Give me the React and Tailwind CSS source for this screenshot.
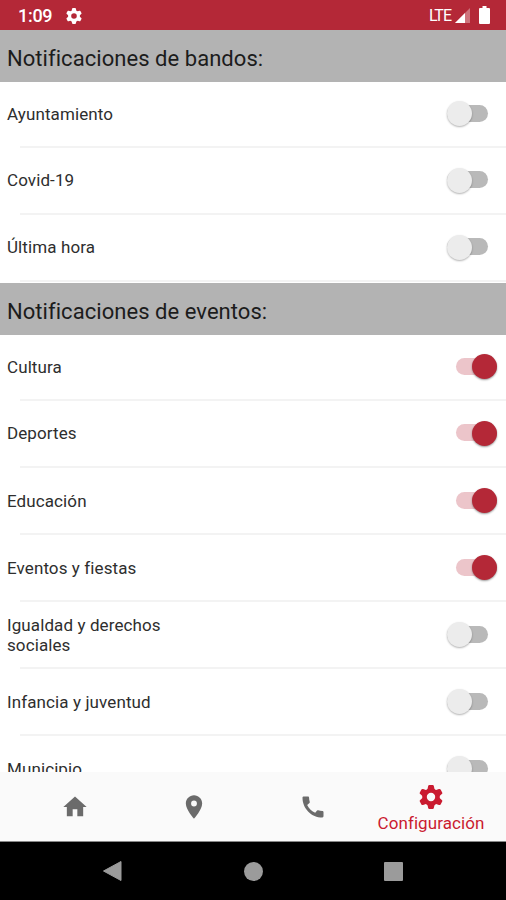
import { useState } from "react";
import { MdCall, MdHome, MdPlace } from "react-icons/md";

const BANDOS = [
  { name: "Ayuntamiento", on: false },
  { name: "Covid-19", on: false },
  { name: "Última hora", on: false },
];

const EVENTOS = [
  { name: "Cultura", on: true },
  { name: "Deportes", on: true },
  { name: "Educación", on: true },
  { name: "Eventos y fiestas", on: true },
  { name: "Igualdad y derechos sociales", on: false },
  { name: "Infancia y juventud", on: false },
  { name: "Municipio", on: false },
];

// six-toothed gear, a ring with one rounded tooth every 60 degrees
function GearIcon({ className }) {
  return (
    <svg className={className} viewBox="0 0 24 24" fill="currentColor">
      <circle cx="12" cy="12" r="6.5" fill="none" stroke="currentColor" strokeWidth="4.6" />
      {[0, 60, 120, 180, 240, 300].map((deg) => (
        <path
          key={deg}
          d="M8.200 5.500 9.100 1.200Q9.300 0 10.400 0h3.200q1.100 0 1.300 1.200l.9 4.300z"
          transform={`rotate(${deg} 12 12)`}
        />
      ))}
    </svg>
  );
}

function StatusBar() {
  return (
    <header className="flex h-[30px] shrink-0 items-center bg-[#b42837] pr-4 pl-[18px] pt-px text-white">
      <span className="text-[18px] font-medium tracking-[-0.3px]">1:09</span>
      <GearIcon className="ml-[14px] size-4" />
      <span className="ml-auto pt-px text-[16px] tracking-[-1px]">LTE</span>
      <svg className="ml-[4px]" width="15" height="15" viewBox="0 0 15 15" fill="currentColor">
        <path d="M15 0v15H0z" opacity="0.35" />
        <path d="M10 5v10H0z" />
      </svg>
      <svg className="mb-[2px] ml-[9px]" width="11" height="18" viewBox="0 0 11 18" fill="currentColor">
        <path d="M3.500 0h4v2H10q1 0 1 1v14q0 1-1 1H1q-1 0-1-1V3q0-1 1-1h2.500z" />
      </svg>
    </header>
  );
}

function Toggle({ on, onClick, label }) {
  return (
    <button
      role="switch"
      aria-checked={on}
      aria-label={label}
      onClick={onClick}
      className={`mb-px flex h-[26px] w-[41px] items-center ${on ? "mr-[9.5px]" : "mr-[18.5px]"}`}
    >
      <span
        className={`flex h-[17px] w-[41px] items-center rounded-full ${
          on ? "justify-end bg-[#ecc5ca]" : "bg-[#b9b9b9]"
        }`}
      >
        <span
          className={`mt-px size-[25px] shrink-0 rounded-full ${
            on
              ? "bg-[#b42837] shadow-[0_1px_2px_rgba(0,0,0,0.4)]"
              : "bg-[#ececec] shadow-[0_1px_2px_rgba(0,0,0,0.3)]"
          }`}
        />
      </span>
    </button>
  );
}

function Section({ title, items }) {
  const [rows, setRows] = useState(items);

  const toggle = (name) => {
    setRows(rows.map((r) => (r.name === name ? { ...r, on: !r.on } : r)));
  };

  return (
    <section className="shrink-0 pb-[1.6px]">
      <h2 className="flex h-[51.5px] items-center bg-[#b3b3b3] pt-[5px] pl-[7px] text-[22px] tracking-[0.05px] text-[#1c1c1c]">
        {title}
      </h2>
      {rows.map((row) => (
        <div key={row.name} className="group">
          <div className="flex h-[65px] items-center justify-between pl-[7px] group-first-of-type:h-16">
            <span className="w-[170px] text-[17px] leading-5 tracking-[0.1px] text-[#2e2e2e]">
              {row.name}
            </span>
            <Toggle on={row.on} label={row.name} onClick={() => toggle(row.name)} />
          </div>
          <div className="ml-5 h-[2.1px] bg-[#f3f3f3]" />
        </div>
      ))}
    </section>
  );
}

function TabBar() {
  return (
    <nav className="grid h-[70px] shrink-0 grid-cols-[119px_119px_119px_118px] border-b border-[#888] bg-[#fafafa] pl-[15px] text-[#6b6b6b]">
      <button className="flex items-center justify-center pt-px">
        <MdHome className="size-7" />
      </button>
      <button className="flex items-center justify-center pt-px">
        <MdPlace className="size-7" />
      </button>
      <button className="flex items-center justify-center pt-px">
        <MdCall className="size-7" />
      </button>
      <button className="flex flex-col items-center justify-center pt-1 text-[#ca1b30]">
        <GearIcon className="my-0.5 size-6" />
        <span className="text-[17px] leading-6 tracking-[0.08px]">Configuración</span>
      </button>
    </nav>
  );
}

function SystemBar() {
  return (
    <footer className="flex h-[58px] shrink-0 items-center bg-black pl-[102px] text-[#9b9b9b]">
      <svg width="20" height="22" viewBox="0 0 20 22" fill="currentColor">
        <path d="M19 1.500v19L1.500 11z" stroke="currentColor" strokeLinejoin="round" />
      </svg>
      <span className="ml-[122px] size-[19px] rounded-full bg-[#9b9b9b]" />
      <span className="ml-[121px] size-[19px] rounded-[1px] bg-[#9b9b9b]" />
    </footer>
  );
}

export default function App() {
  return (
    <div className="flex h-[900px] w-[506px] flex-col overflow-hidden bg-white font-[Roboto,sans-serif]">
      <StatusBar />
      <main className="flex min-h-0 flex-1 flex-col overflow-hidden">
        <Section title="Notificaciones de bandos:" items={BANDOS} />
        <Section title="Notificaciones de eventos:" items={EVENTOS} />
      </main>
      <TabBar />
      <SystemBar />
    </div>
  );
}
